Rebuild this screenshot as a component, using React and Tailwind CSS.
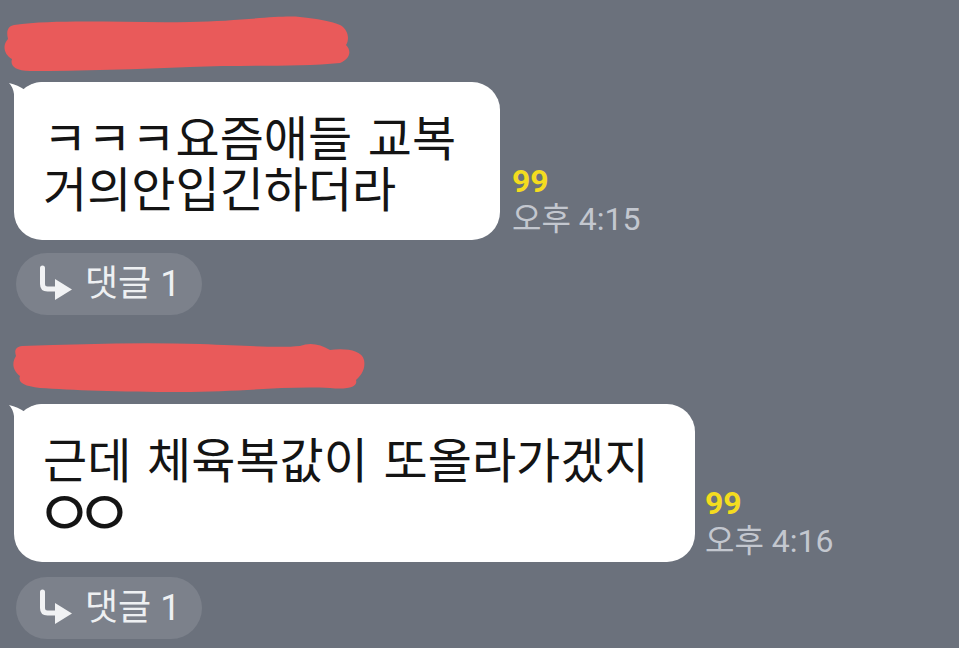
import React from "react";

const KR = { fontFamily: '"Noto Sans CJK KR", "Noto Sans", sans-serif' };
const META = { fontFamily: 'Roboto, "Noto Sans CJK KR", sans-serif' };

function Scribble({ variant }) {
  if (variant === 1) {
    return (
      <svg width="360" height="60" viewBox="0 0 360 60" className="block">
        <path
          d="M14 10 C60 4 120 8 190 7 C240 6 280 0 300 2 C318 4 330 6 340 10 C348 14 350 24 346 30 C352 36 350 44 340 48 C300 52 240 50 190 52 C140 54 80 56 30 56 C14 56 10 50 12 44 C4 40 2 30 8 24 C6 16 8 11 14 10 Z"
          fill="#e95a5a"
        />
      </svg>
    );
  }
  return (
    <svg width="370" height="56" viewBox="0 0 370 56" className="block">
      <path
        d="M22 6 C80 4 140 2 200 4 C250 6 280 8 300 6 C310 2 320 4 330 10 C345 8 362 10 364 20 C366 30 360 36 356 40 C358 46 350 50 330 48 C280 46 240 52 180 52 C120 52 70 50 40 48 C22 46 18 42 20 36 C12 30 12 22 16 16 C14 10 16 7 22 6 Z"
        fill="#e95a5a"
      />
    </svg>
  );
}

function Bubble({ children, width }) {
  return (
    <div
      className="relative bg-white rounded-[28px] pl-[29px] pt-[28px] pb-[28px] text-[48px] leading-[51px] font-normal text-[#141414] whitespace-nowrap [word-spacing:5px]"
      style={{ ...KR, width }}
    >
      <svg
        width="34"
        height="30"
        viewBox="0 0 34 30"
        className="absolute left-[-5px] top-0"
      >
        <path
          d="M0 1 Q9 3 16 8 Q21 1 34 0 L34 30 L5 30 L5 12 Q4 5 0 1 Z"
          fill="#ffffff"
        />
      </svg>
      <div className="relative">{children}</div>
    </div>
  );
}

function Meta({ time }) {
  return (
    <div className="flex flex-col pb-[3px]" style={META}>
      <div className="text-[32px] leading-[40px] font-bold text-[#f4dc1f]">99</div>
      <div className="text-[32px] leading-[36px] text-[#c3c7cf]">{time}</div>
    </div>
  );
}

function Reply() {
  return (
    <div className="flex items-center w-[186px] h-[62px] rounded-full bg-[#7c818b] pl-[20px]">
      <svg width="40" height="40" viewBox="0 0 40 40" className="block">
        <path
          d="M6.5 4 V20 Q6.5 25 11.5 25 H22"
          stroke="#f1f2f4"
          strokeWidth="5"
          fill="none"
          strokeLinecap="round"
        />
        <path d="M19 15 L36 25.5 L19 36 Z" fill="#f1f2f4" />
      </svg>
      <span
        className="ml-[9px] text-[36px] leading-none text-[#eef0f2]"
        style={META}
      >
        댓글 1
      </span>
    </div>
  );
}

export default function App() {
  return (
    <div className="w-[959px] h-[648px] bg-[#6b717c] overflow-hidden">
      <div className="pt-[15px]">
        <Scribble variant={1} />
      </div>
      <div className="flex items-end mt-[7px] pl-[14px]">
        <Bubble width={486}>
          <div>ㅋㅋㅋ요즘애들 교복</div>
          <div>거의안입긴하더라</div>
        </Bubble>
        <div className="ml-[12px]">
          <Meta time="오후 4:15" />
        </div>
      </div>
      <div className="mt-[13px] pl-[16px]">
        <Reply />
      </div>
      <div className="mt-[25px]">
        <Scribble variant={2} />
      </div>
      <div className="flex items-end mt-[8px] pl-[14px]">
        <Bubble width={681}>
          <div>근데 체육복값이 또올라가겠지</div>
          <div className="ml-[-8px] text-[64px] tracking-[-19px] leading-[51px]">ㅇㅇ</div>
        </Bubble>
        <div className="ml-[10px]">
          <Meta time="오후 4:16" />
        </div>
      </div>
      <div className="mt-[15px] pl-[16px]">
        <Reply />
      </div>
    </div>
  );
}
